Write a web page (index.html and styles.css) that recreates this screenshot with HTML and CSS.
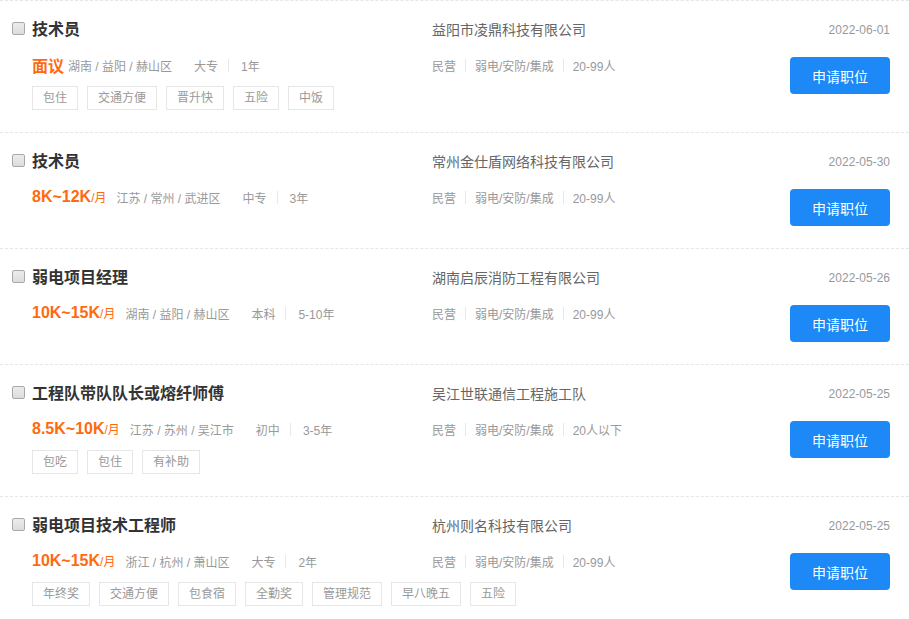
FILE: index.html
```html
<!DOCTYPE html>
<html lang="zh-CN">
<head>
<meta charset="utf-8">
<title>职位列表</title>
<link rel="stylesheet" href="styles.css">
</head>
<body>
<ul class="job-list">
  <li class="job">
    <span class="check"></span>
    <div class="info">
      <div class="title">技术员</div>
      <div class="meta">
        <span class="salary nego">面议</span><span class="loc">湖南 / 益阳 / 赫山区</span><span class="edu">大专</span><i class="sep"></i><span class="exp">1年</span>
      </div>
      <div class="tags"><span class="tag">包住</span><span class="tag">交通方便</span><span class="tag">晋升快</span><span class="tag">五险</span><span class="tag">中饭</span></div>
    </div>
    <div class="company">
      <div class="cname">益阳市凌鼎科技有限公司</div>
      <div class="cmeta"><span>民营</span><i class="sep"></i><span>弱电/安防/集成</span><i class="sep"></i><span>20-99人</span></div>
    </div>
    <div class="side">
      <div class="date">2022-06-01</div>
      <button class="apply">申请职位</button>
    </div>
  </li>
  <li class="job">
    <span class="check"></span>
    <div class="info">
      <div class="title">技术员</div>
      <div class="meta">
        <span class="salary">8K~12K<small>/月</small></span><span class="loc">江苏 / 常州 / 武进区</span><span class="edu">中专</span><i class="sep"></i><span class="exp">3年</span>
      </div>
    </div>
    <div class="company">
      <div class="cname">常州金仕盾网络科技有限公司</div>
      <div class="cmeta"><span>民营</span><i class="sep"></i><span>弱电/安防/集成</span><i class="sep"></i><span>20-99人</span></div>
    </div>
    <div class="side">
      <div class="date">2022-05-30</div>
      <button class="apply">申请职位</button>
    </div>
  </li>
  <li class="job">
    <span class="check"></span>
    <div class="info">
      <div class="title">弱电项目经理</div>
      <div class="meta">
        <span class="salary">10K~15K<small>/月</small></span><span class="loc">湖南 / 益阳 / 赫山区</span><span class="edu">本科</span><i class="sep"></i><span class="exp">5-10年</span>
      </div>
    </div>
    <div class="company">
      <div class="cname">湖南启辰消防工程有限公司</div>
      <div class="cmeta"><span>民营</span><i class="sep"></i><span>弱电/安防/集成</span><i class="sep"></i><span>20-99人</span></div>
    </div>
    <div class="side">
      <div class="date">2022-05-26</div>
      <button class="apply">申请职位</button>
    </div>
  </li>
  <li class="job">
    <span class="check"></span>
    <div class="info">
      <div class="title">工程队带队队长或熔纤师傅</div>
      <div class="meta">
        <span class="salary">8.5K~10K<small>/月</small></span><span class="loc">江苏 / 苏州 / 吴江市</span><span class="edu">初中</span><i class="sep"></i><span class="exp">3-5年</span>
      </div>
      <div class="tags"><span class="tag">包吃</span><span class="tag">包住</span><span class="tag">有补助</span></div>
    </div>
    <div class="company">
      <div class="cname">吴江世联通信工程施工队</div>
      <div class="cmeta"><span>民营</span><i class="sep"></i><span>弱电/安防/集成</span><i class="sep"></i><span>20人以下</span></div>
    </div>
    <div class="side">
      <div class="date">2022-05-25</div>
      <button class="apply">申请职位</button>
    </div>
  </li>
  <li class="job">
    <span class="check"></span>
    <div class="info">
      <div class="title">弱电项目技术工程师</div>
      <div class="meta">
        <span class="salary">10K~15K<small>/月</small></span><span class="loc">浙江 / 杭州 / 萧山区</span><span class="edu">大专</span><i class="sep"></i><span class="exp">2年</span>
      </div>
      <div class="tags"><span class="tag">年终奖</span><span class="tag">交通方便</span><span class="tag">包食宿</span><span class="tag">全勤奖</span><span class="tag">管理规范</span><span class="tag">早八晚五</span><span class="tag">五险</span></div>
    </div>
    <div class="company">
      <div class="cname">杭州则名科技有限公司</div>
      <div class="cmeta"><span>民营</span><i class="sep"></i><span>弱电/安防/集成</span><i class="sep"></i><span>20-99人</span></div>
    </div>
    <div class="side">
      <div class="date">2022-05-25</div>
      <button class="apply">申请职位</button>
    </div>
  </li>
</ul>
</body>
</html>
```

FILE: styles.css
```css
* { box-sizing: border-box; }
html, body { margin: 0; padding: 0; background: #fff; }
body {
  font-family: "Liberation Sans", "Noto Sans CJK SC", sans-serif;
  color: #333;
  font-size: 12px;
}
.job-list { list-style: none; margin: 0; padding: 0; }
.job {
  display: flex;
  align-items: flex-start;
  border-top: 1px dashed #e6e6e6;
  padding: 18px 19px 22px 12px;
}
.check {
  flex: none;
  width: 13px;
  height: 13px;
  margin-top: 3px;
  margin-right: 7px;
  border: 1px solid #a9a9a9;
  border-radius: 2px;
  background: linear-gradient(#ececec, #dcdcdc);
}
.info { width: 400px; flex: none; }
.title {
  font-size: 16px;
  line-height: 22px;
  font-weight: 700;
  color: #333;
}
.meta {
  display: flex;
  align-items: center;
  margin-top: 13px;
  height: 22px;
  color: #999;
  font-size: 12px;
  white-space: nowrap;
}
.salary {
  color: #ff6a0f;
  font-size: 16px;
  font-weight: 700;
  margin-right: 10px;
}
.salary small { font-size: 12px; font-weight: 400; }
.salary.nego { margin-right: 4px; }
.loc { margin-right: 22px; }
.sep {
  display: inline-block;
  width: 1px;
  height: 13px;
  background: #e8e8e8;
}
.meta .sep { margin: 0 12px 0 10px; }
.tags { display: flex; gap: 9px; margin-top: 10px; }
.tag {
  flex: none;
  white-space: nowrap;
  height: 24px;
  line-height: 22px;
  padding: 0 10px;
  border: 1px solid #e6e6e6;
  color: #999;
  font-size: 12px;
}
.company { flex: 1; }
.cname { font-size: 14px; line-height: 22px; color: #666; }
.cmeta {
  display: flex;
  align-items: center;
  margin-top: 13px;
  height: 22px;
  color: #999;
  white-space: nowrap;
}
.cmeta .sep { margin: 0 9px; }
.side {
  width: 100px;
  flex: none;
  display: flex;
  flex-direction: column;
  align-items: flex-end;
}
.date { line-height: 22px; color: #999; font-size: 12px; }
.apply {
  margin-top: 16px;
  width: 100px;
  height: 37px;
  border: 0;
  border-radius: 4px;
  background: #1d89f6;
  color: #fff;
  font-family: inherit;
  font-size: 14px;
  cursor: pointer;
}
```
